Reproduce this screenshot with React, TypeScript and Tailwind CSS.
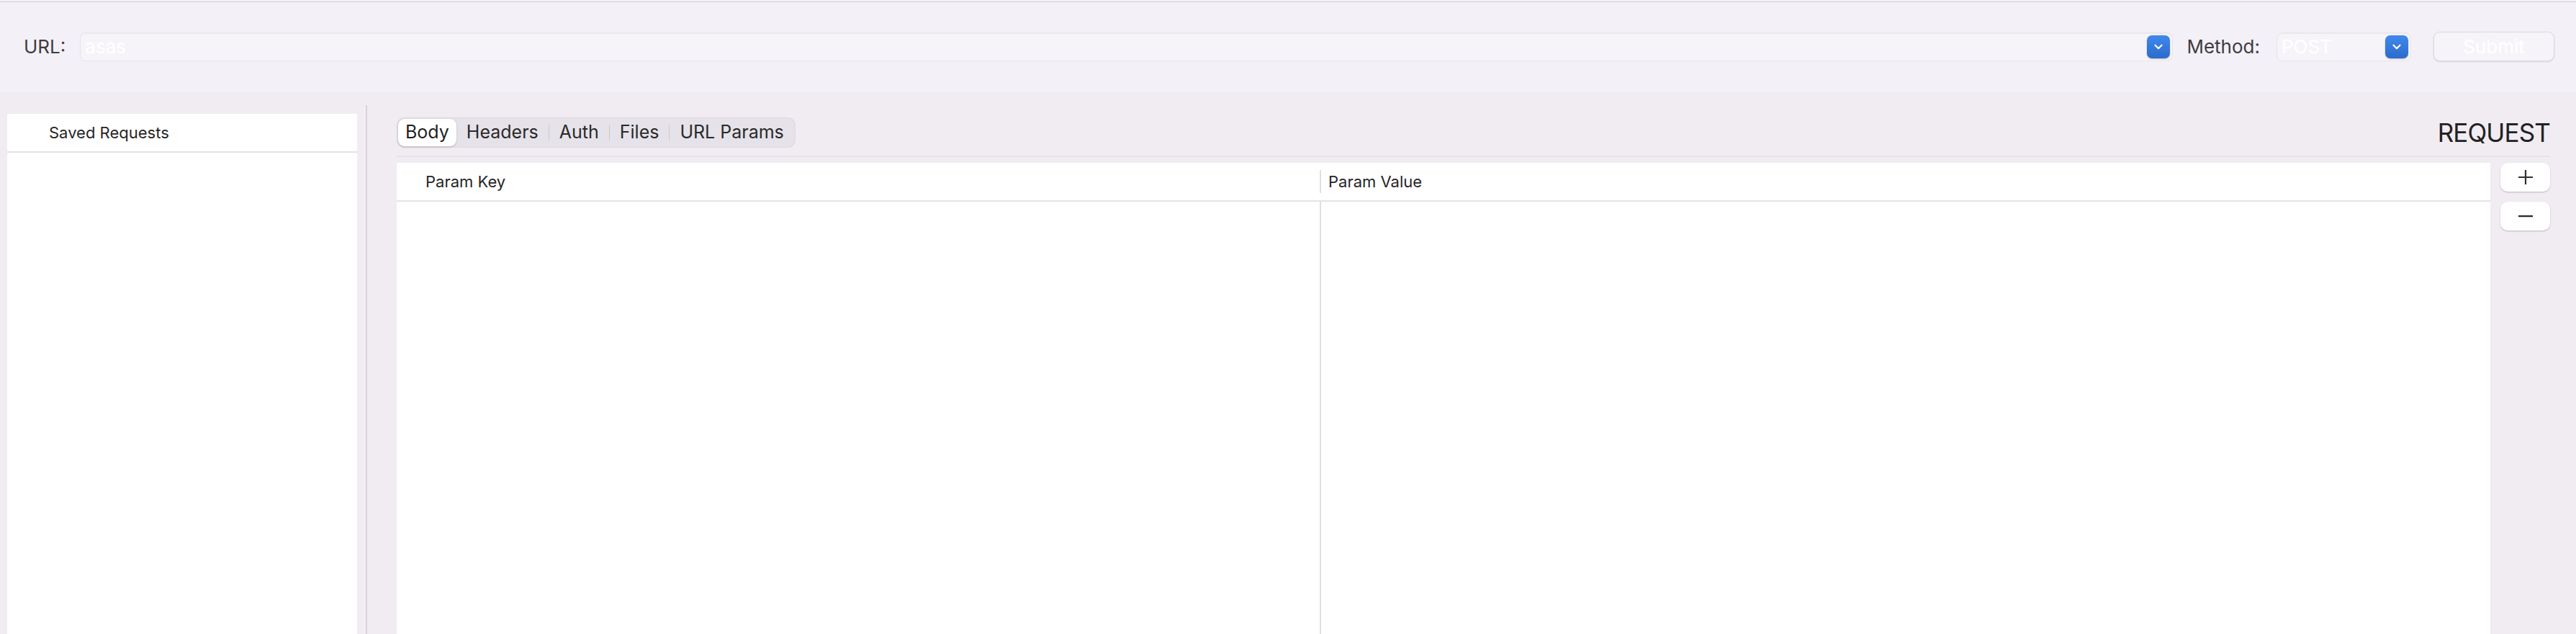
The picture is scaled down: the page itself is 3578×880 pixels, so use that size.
import { ChevronDown } from "lucide-react";

const tabs = ["Body", "Headers", "Auth", "Files", "URL Params"];

function PopupArrow() {
    return (
        <div className="w-[32px] h-[32px] rounded-[7px] bg-gradient-to-b from-[#4089eb] to-[#2b6bcc] shadow-[0_1px_2px_rgba(0,0,0,0.25)] flex items-center justify-center shrink-0">
            <ChevronDown className="w-[18px] h-[18px] text-white" strokeWidth={3} />
        </div>
    );
}

export default function App() {
    return (
        <div className="h-screen w-full flex flex-col overflow-hidden bg-[#f0ecf2] text-[#262626] font-['Inter','Liberation_Sans',sans-serif]">
            {/* Toolbar */}
            <div className="h-[128px] shrink-0 bg-[#f4f0f7] flex flex-col">
                <div className="h-[2px]" />
                <div className="h-px bg-[#d6d1d9]" />
                <div className="flex-1 flex items-center pl-[33px] pr-[30px] pb-[2px]">
                    <span className="text-[26px] text-[#3f3d42] mr-[20px]">URL:</span>

                    {/* URL combo box */}
                    <div className="flex-1 h-[40px] flex items-center rounded-[8px] bg-[#f7f4f9] border border-[#e8e4eb] shadow-[inset_0_1px_1px_rgba(0,0,0,0.05)] pl-[6px] pr-[3px]">
                        <span className="flex-1 text-[26px] text-white leading-none">asas</span>
                        <PopupArrow />
                    </div>

                    <span className="text-[26px] text-[#3f3d42] ml-[19px] mr-[23px]">Method:</span>

                    {/* Method popup */}
                    <div className="w-[187px] h-[40px] flex items-center rounded-[8px] bg-[#f7f4f9] border border-[#e8e4eb] shadow-[inset_0_1px_1px_rgba(0,0,0,0.05)] pl-[6px] pr-[3px]">
                        <span className="flex-1 text-[26px] text-white leading-none">POST</span>
                        <PopupArrow />
                    </div>

                    <button className="ml-[31px] w-[168px] h-[41px] rounded-[9px] bg-[#f7f4f9] border border-[#dcd8df] shadow-[0_1px_2px_rgba(0,0,0,0.12)] text-[26px] text-white">
                        Submit
                    </button>
                </div>
            </div>

            {/* Main */}
            <div className="flex-1 flex min-h-0">
                {/* Sidebar */}
                <aside className="ml-[10px] mt-[30px] w-[486px] bg-white flex flex-col">
                    <div className="h-[54px] flex items-center pl-[58px] text-[22px] text-[#262626] border-b-2 border-[#e5e2e7]">
                        Saved Requests
                    </div>
                </aside>

                {/* Split divider */}
                <div className="ml-[12px] mt-[18px] w-[2px] bg-[#d8d3da]" />

                {/* Request pane */}
                <section className="flex-1 ml-[41px] mr-[36px] mt-[35px] flex flex-col min-w-0">
                    <div className="h-[42px] flex items-center justify-between">
                        <div className="h-[42px] flex items-center rounded-[11px] bg-[#e6e2e9] p-[2px] shadow-[inset_0_0_0_1px_rgba(0,0,0,0.04)]">
                            {tabs.map((tab, i) => (
                                <div key={tab} className="flex items-center h-full">
                                    {i > 1 && <div className="w-px h-[22px] bg-[#cdc9d0]" />}
                                    <div
                                        className={
                                            i === 0
                                                ? "h-full flex items-center px-[10px] rounded-[9px] bg-white shadow-[0_1px_3px_rgba(0,0,0,0.2)] text-[25px] text-[#1f1f1f]"
                                                : "h-full flex items-center px-[14px] text-[25px] text-[#2a2a2a]"
                                        }
                                    >
                                        {tab}
                                    </div>
                                </div>
                            ))}
                        </div>
                        <span className="text-[35px] text-[#222] tracking-tight">REQUEST</span>
                    </div>

                    <div className="mt-[11px] h-[2px] bg-[#e5e1e8]" />

                    <div className="mt-[8px] flex-1 flex gap-[14px] min-h-0">
                        {/* Params table */}
                        <div className="flex-1 bg-white flex flex-col">
                            <div className="h-[54px] flex items-center border-b-2 border-[#e5e2e7] text-[22px] text-[#262626]">
                                <div className="w-[1282px] pl-[40px]">Param Key</div>
                                <div className="w-[2px] h-[32px] bg-[#dedede]" />
                                <div className="pl-[10px]">Param Value</div>
                            </div>
                            <div className="flex-1 flex">
                                <div className="w-[1282px]" />
                                <div className="w-[2px] bg-[#dedede]" />
                                <div className="flex-1" />
                            </div>
                        </div>

                        {/* Add / remove */}
                        <div className="w-[69px] flex flex-col gap-[14px]">
                            <button className="h-[40px] rounded-[10px] bg-white shadow-[0_1px_2px_rgba(0,0,0,0.22)] flex items-center justify-center">
                                <svg width="22" height="22" viewBox="0 0 22 22" stroke="#2f2f2f" strokeWidth="2.2" fill="none">
                                    <path d="M11 1v20M1 11h20" />
                                </svg>
                            </button>
                            <button className="h-[40px] rounded-[10px] bg-white shadow-[0_1px_2px_rgba(0,0,0,0.22)] flex items-center justify-center">
                                <svg width="22" height="22" viewBox="0 0 22 22" stroke="#2f2f2f" strokeWidth="2.4" fill="none">
                                    <path d="M1 11h20" />
                                </svg>
                            </button>
                        </div>
                    </div>
                </section>
            </div>
        </div>
    );
}
